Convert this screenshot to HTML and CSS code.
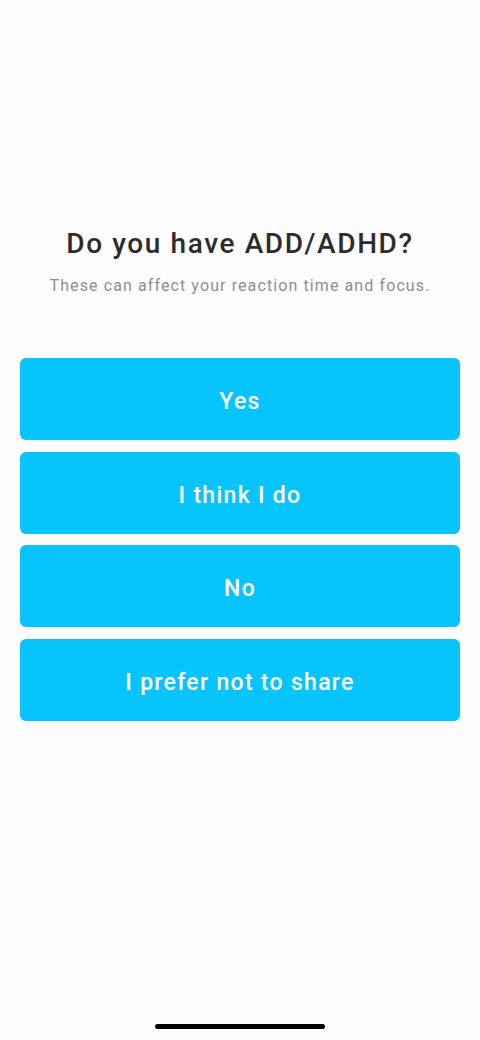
FILE: index.html
```html
<!DOCTYPE html>
<html lang="en">
<head>
  <meta charset="UTF-8">
  <title>Do you have ADD/ADHD?</title>
  <meta name="viewport" content="width=device-width, initial-scale=1.0">
  <link rel="stylesheet" href="styles.css">
</head>
<body>
  <main class="screen">
    <header class="question">
      <h1>Do you have ADD/ADHD?</h1>
      <p class="hint">These can affect your reaction time and focus.</p>
    </header>
    <div class="answers">
      <button type="button" class="answer">Yes</button>
      <button type="button" class="answer">I think I do</button>
      <button type="button" class="answer">No</button>
      <button type="button" class="answer">I prefer not to share</button>
    </div>
  </main>
  <div class="home-bar"></div>
</body>
</html>
```

FILE: styles.css
```css
body {
  margin: 0;
  padding: 0;
  background: #fdfcfd;
  font-family: 'Roboto', 'Liberation Sans', sans-serif;
  min-height: 100vh;
  display: flex;
  flex-direction: column;
}
.screen {
  flex: 1;
  display: flex;
  flex-direction: column;
  padding: 0 20px;
}
.question {
  text-align: center;
  padding-top: 224px;
}
h1 {
  margin: 0;
  color: #2c2c2e;
  font-size: 28px;
  font-weight: 500;
  letter-spacing: 1.6px;
  line-height: 40px;
}
.hint {
  margin: 11px 0 0 0;
  color: #8e8e93;
  font-size: 16px;
  letter-spacing: 1.1px;
  line-height: 22px;
}
.answers {
  display: flex;
  flex-direction: column;
  gap: 11.5px;
  margin-top: 61px;
}
.answer {
  display: block;
  width: 100%;
  height: 82px;
  padding: 5px 0 0 0;
  border: none;
  border-radius: 6px;
  background: #08c4fd;
  color: #ffffff;
  font-family: inherit;
  font-size: 23px;
  font-weight: 500;
  letter-spacing: 1.3px;
  cursor: pointer;
}
.home-bar {
  width: 170px;
  height: 5px;
  border-radius: 3px;
  background: #000;
  margin: 0 auto 11px auto;
}
```
